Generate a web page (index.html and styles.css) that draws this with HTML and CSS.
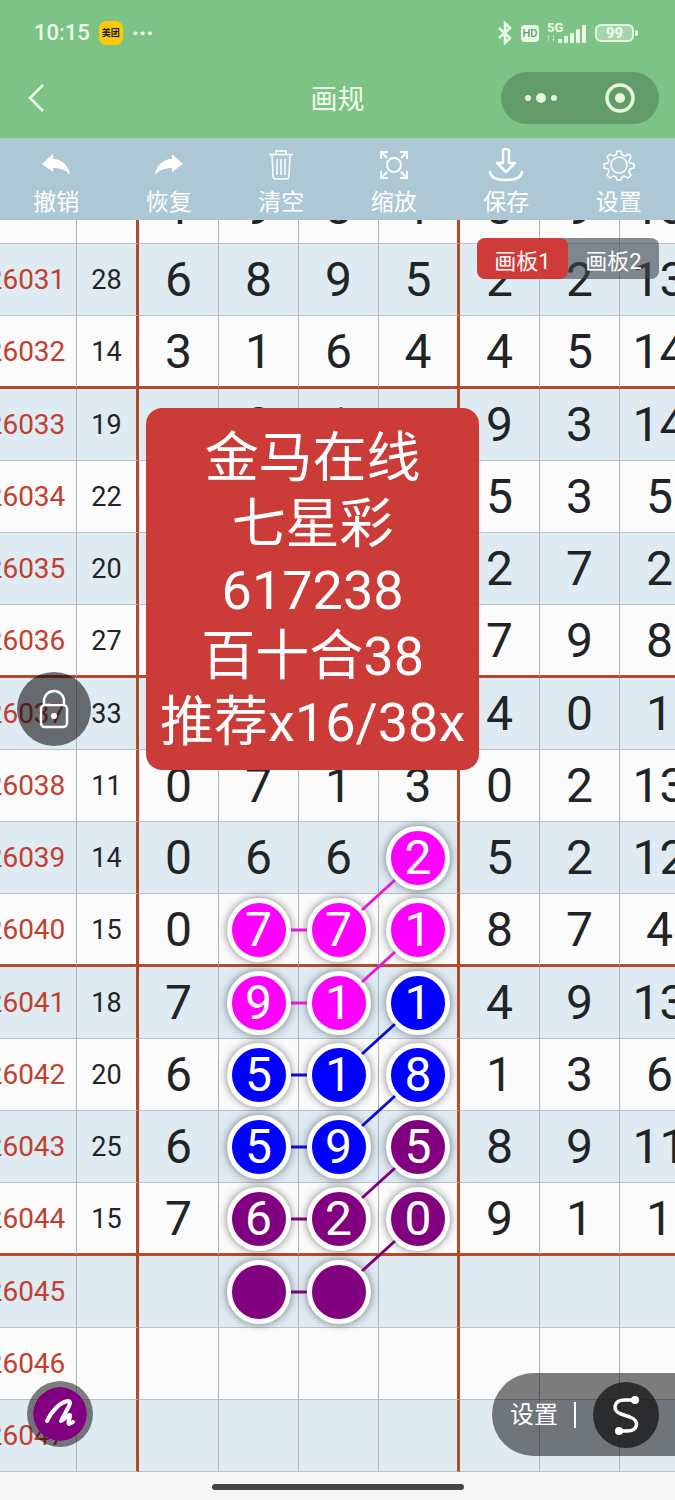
FILE: index.html
```html
<!DOCTYPE html>
<html lang="zh-CN">
<head>
    <meta charset="UTF-8">
    <meta name="viewport" content="width=device-width, initial-scale=1.0">
    <title>画规</title>
    <link rel="stylesheet" href="styles.css">
</head>
<body>
    <header class="header">
        <div class="status">
            <span class="time">10:15</span>
            <span class="app">美团</span>
            <span class="more">···</span>
            <div class="signals">
                <svg width="16" height="24" viewBox="0 0 16 24" fill="none" stroke="#e9fbe6" stroke-width="2.500"><path d="M2 7l11 10-5 5V2l5 5L2 17"/></svg>
                <span class="hd">HD</span>
                <svg width="40" height="24" viewBox="0 0 40 24" fill="#e9fbe6">
                    <text x="0" y="11" class="net">5G</text>
                    <path d="M0 16h3l-1.500-2zM1 16h1v4H1zM5 18h3l-1.500 3zM6 14h1v4H6z" opacity=".5"/>
                    <rect x="11" y="18" width="4" height="4" rx="1"/>
                    <rect x="17" y="15" width="4" height="7" rx="1"/>
                    <rect x="23" y="12" width="4" height="10" rx="1"/>
                    <rect x="29" y="8" width="4" height="14" rx="1"/>
                    <rect x="35" y="4" width="4" height="18" rx="1"/>
                </svg>
                <span class="battery">99</span>
            </div>
        </div>
        <nav class="titlebar">
            <a href="#" class="back" aria-label="返回">
                <svg width="20" height="30" viewBox="0 0 20 30" fill="none" stroke="#effdec" stroke-width="2.500"><path d="M17 2L4 15l13 13"/></svg>
            </a>
            <h1>画规</h1>
            <div class="capsule">
                <button type="button" aria-label="更多">
                    <svg width="34" height="12" viewBox="0 0 34 12" fill="#e4f5e0"><circle cx="4" cy="6" r="3"/><circle cx="17" cy="6" r="5"/><circle cx="30" cy="6" r="3"/></svg>
                </button>
                <button type="button" aria-label="关闭">
                    <svg width="30" height="30" viewBox="0 0 30 30"><circle cx="15" cy="15" r="13" fill="none" stroke="#e4f5e0" stroke-width="3.500"/><circle cx="15" cy="15" r="5" fill="#e4f5e0"/></svg>
                </button>
            </div>
        </nav>
    </header>

    <div class="toolbar">
        <button type="button">
            <svg viewBox="0 0 36 36" fill="#fff"><path d="M4 17L15 7v5c9 0 16 7 17 16-4-5-9-7-17-7v4z"/></svg>
            撤销
        </button>
        <button type="button">
            <svg viewBox="0 0 36 36" fill="#fff"><path d="M32 17L21 7v5C12 12 5 19 4 28c4-5 9-7 17-7v4z"/></svg>
            恢复
        </button>
        <button type="button">
            <svg viewBox="0 0 36 36" fill="none" stroke="#fff" stroke-width="1.500"><path d="M6 7.500h24M13 7V4h10v3M9 8l1 21q0 3 3 3h10q3 0 3-3l1-21M14 12v16M18 12v16M22 12v16"/></svg>
            清空
        </button>
        <button type="button">
            <svg viewBox="0 0 36 36" fill="none" stroke="#fff" stroke-width="2"><circle cx="18" cy="18" r="7"/><path d="M5 12V5h7M5 5l6 6M24 5h7v7M31 5l-6 6M5 24v7h7M5 31l6-6M24 31h7v-7M31 31l-6-6"/></svg>
            缩放
        </button>
        <button type="button">
            <svg viewBox="0 0 36 36" fill="none" stroke="#fff" stroke-width="2.500" stroke-linejoin="round" stroke-linecap="round"><path d="M15 4q0-2 3-2t3 2v12h6l-9 9-9-9h6zM2 25q1 8 16 8t16-8"/></svg>
            保存
        </button>
        <button type="button">
            <svg viewBox="0 0 36 36" fill="none" stroke="#fff" stroke-width="1.500" stroke-linejoin="round"><circle cx="18" cy="18" r="8"/><path d="M16 4h4l1 4 3 1 4-2 2 3-2 4 1 2 4 1v4l-4 1-1 3 2 3-3 3-4-2-2 1-1 3h-4l-1-3-3-1-3 2-3-3 2-4-1-2-4-1v-4l4-1 1-3-2-3 3-3 3 2 3-1z"/></svg>
            设置
        </button>
    </div>

    <main class="board">
        <table class="trend">
            <colgroup>
                <col class="c-issue"><col class="c-sum"><col class="c-num"><col class="c-num"><col class="c-num"><col class="c-last"><col class="c-num"><col class="c-num"><col class="c-num">
            </colgroup>
            <tbody>
                <tr><th>26030</th><td></td><td>1</td><td>9</td><td>8</td><td>1</td><td>8</td><td>9</td><td>13</td></tr>
                <tr><th>26031</th><td>28</td><td>6</td><td>8</td><td>9</td><td>5</td><td>2</td><td>2</td><td>13</td></tr>
                <tr><th>26032</th><td>14</td><td>3</td><td>1</td><td>6</td><td>4</td><td>4</td><td>5</td><td>14</td></tr>
                <tr><th>26033</th><td>19</td><td></td><td>8</td><td>1</td><td></td><td>9</td><td>3</td><td>14</td></tr>
                <tr><th>26034</th><td>22</td><td></td><td></td><td></td><td></td><td>5</td><td>3</td><td>5</td></tr>
                <tr><th>26035</th><td>20</td><td></td><td></td><td></td><td></td><td>2</td><td>7</td><td>2</td></tr>
                <tr><th>26036</th><td>27</td><td></td><td></td><td></td><td></td><td>7</td><td>9</td><td>8</td></tr>
                <tr><th>26037</th><td>33</td><td></td><td></td><td></td><td></td><td>4</td><td>0</td><td>1</td></tr>
                <tr><th>26038</th><td>11</td><td>0</td><td>7</td><td>1</td><td>3</td><td>0</td><td>2</td><td>13</td></tr>
                <tr><th>26039</th><td>14</td><td>0</td><td>6</td><td>6</td><td><span class="ball pink">2</span></td><td>5</td><td>2</td><td>12</td></tr>
                <tr><th>26040</th><td>15</td><td>0</td><td><span class="ball pink">7</span></td><td><span class="ball pink">7</span></td><td><span class="ball pink">1</span></td><td>8</td><td>7</td><td>4</td></tr>
                <tr><th>26041</th><td>18</td><td>7</td><td><span class="ball pink">9</span></td><td><span class="ball pink">1</span></td><td><span class="ball blue">1</span></td><td>4</td><td>9</td><td>13</td></tr>
                <tr><th>26042</th><td>20</td><td>6</td><td><span class="ball blue">5</span></td><td><span class="ball blue">1</span></td><td><span class="ball blue">8</span></td><td>1</td><td>3</td><td>6</td></tr>
                <tr><th>26043</th><td>25</td><td>6</td><td><span class="ball blue">5</span></td><td><span class="ball blue">9</span></td><td><span class="ball purple">5</span></td><td>8</td><td>9</td><td>11</td></tr>
                <tr><th>26044</th><td>15</td><td>7</td><td><span class="ball purple">6</span></td><td><span class="ball purple">2</span></td><td><span class="ball purple">0</span></td><td>9</td><td>1</td><td>1</td></tr>
                <tr><th>26045</th><td></td><td></td><td><span class="ball purple"></span></td><td><span class="ball purple"></span></td><td></td><td></td><td></td><td></td></tr>
                <tr><th>26046</th><td></td><td></td><td></td><td></td><td></td><td></td><td></td><td></td></tr>
                <tr><th>26047</th><td></td><td></td><td></td><td></td><td></td><td></td><td></td><td></td></tr>
            </tbody>
        </table>

        <!-- links between the marked numbers -->
        <svg class="links" width="675" height="1252" viewBox="0 0 675 1252" fill="none" stroke-width="3">
            <g stroke="#e619d8">
                <path d="M291 710h16M362 690l33-30M291 783h16M362 762l33-30"/>
            </g>
            <g stroke="#0d0dd0">
                <path d="M362 834l33-30M291 855h16M362 906l33-30M291 927h16"/>
            </g>
            <g stroke="#800080">
                <path d="M362 978l33-30M291 999h16M362 1051l33-30M291 1072h16"/>
            </g>
        </svg>

        <div class="tabs">
            <button type="button" class="active">画板1</button>
            <button type="button">画板2</button>
        </div>

        <div class="note">
            <p>金马在线</p>
            <p>七星彩</p>
            <p>617238</p>
            <p>百十合38</p>
            <p>推荐x16/38x</p>
        </div>

        <button type="button" class="lock" aria-label="锁定">
            <svg width="32" height="42" viewBox="0 0 32 42" fill="none" stroke="#fff" stroke-width="2.500"><rect x="3" y="17" width="26" height="22" rx="4"/><path d="M6 17v-4a10 10 0 0 1 20 0v4"/><circle cx="16" cy="28" r="3" fill="#fff" stroke="none"/></svg>
        </button>

        <button type="button" class="pen" aria-label="画笔">
            <svg width="36" height="36" viewBox="0 0 36 36" fill="none" stroke="#fff" stroke-width="4" stroke-linecap="round" stroke-linejoin="round"><path d="M5 25C9 16 18 6 26 5c6 0-3 11-7 20 4-2 6-6 9-6 1 3-3 6-1 9l4-2"/></svg>
        </button>

        <div class="dock">
            <button type="button" class="dock-set">设置</button>
            <button type="button" class="dock-line" aria-label="曲线">
                <svg width="32" height="44" viewBox="0 0 32 44" fill="none" stroke="#fff" stroke-width="3.500"><path d="M25 7H15C3 7 2 18 11 21l9 3c10 4 8 14-3 14H9"/><circle cx="25" cy="7" r="4" fill="#fff" stroke="none"/><circle cx="9" cy="38" r="4" fill="#fff" stroke="none"/></svg>
            </button>
        </div>
    </main>

    <footer class="home"><span></span></footer>
</body>
</html>
```

FILE: styles.css
```css
*{
    box-sizing: border-box;
}

body{
    margin: 0;
    background: #f6f6f6;
    color: #1f2426;
    font-family: Roboto, "Noto Sans CJK SC", sans-serif;
    overflow-x: hidden;
}

button{
    border: 0;
    padding: 0;
    background: none;
    color: #fff;
    font-family: inherit;
    cursor: pointer;
}

svg{
    display: block;
}

/* header */
.header{
    background: #7cc385;
    color: #effdec;
    height: 138px;
}

.status{
    display: flex;
    align-items: center;
    height: 58px;
    padding: 8px 41px 0 34px;
}

.time{
    font-size: 22px;
    font-weight: 500;
    line-height: 24px;
}

.app{
    margin-left: 9px;
    width: 24px;
    height: 24px;
    border-radius: 7px;
    background: #fbcb09;
    color: #221c00;
    font-size: 9px;
    font-weight: bold;
    line-height: 24px;
    text-align: center;
}

.more{
    margin-left: 9px;
    font-size: 24px;
    font-weight: bold;
    line-height: 24px;
}

.signals{
    display: flex;
    align-items: center;
    gap: 8px;
    margin-left: auto;
}

.hd{
    width: 18px;
    height: 17px;
    border-radius: 4px;
    background: #e9fbe6;
    color: #5f9c68;
    font-size: 11px;
    font-weight: 500;
    line-height: 17px;
    text-align: center;
}

.net{
    font-size: 13px;
    font-weight: bold;
}

.battery{
    position: relative;
    width: 39px;
    height: 18px;
    border: 2px solid #dff5dc;
    border-radius: 6px;
    background: #a5d6a9;
    font-size: 15px;
    font-weight: bold;
    line-height: 14px;
    text-align: center;
}

.battery::after{
    content: "";
    position: absolute;
    top: 4px;
    right: -6px;
    width: 3px;
    height: 6px;
    border-radius: 2px;
    background: #dff5dc;
}

.titlebar{
    display: grid;
    grid-template-columns: 1fr auto 1fr;
    align-items: center;
    height: 80px;
    padding: 0 16px;
}

.back{
    width: 20px;
    margin-left: 10px;
}

h1{
    margin: 0;
    font-size: 27px;
    font-weight: normal;
    line-height: 36px;
    padding-top: 4px;
}

.capsule{
    justify-self: end;
    display: flex;
    width: 158px;
    height: 52px;
    border-radius: 26px;
    background: #629d69;
}

.capsule button{
    flex: 1;
    display: flex;
    align-items: center;
    justify-content: center;
}

/* toolbar */
.toolbar{
    display: grid;
    grid-template-columns: repeat(6, 1fr);
    height: 82px;
    background: #adc8d5;
}

.toolbar button{
    display: flex;
    flex-direction: column;
    align-items: center;
    gap: 4px;
    padding-top: 9px;
    font-size: 23px;
    line-height: 32px;
}

.toolbar svg{
    width: 36px;
    height: 36px;
}

/* trend table */
.board{
    position: relative;
    overflow: hidden;
}

.trend{
    width: 724px;
    margin: -48px 0 0 -24px;
    table-layout: fixed;
    border-collapse: separate;
    border-spacing: 0;
    background: #fbfbfb;
}

.c-issue{ width: 101px; }
.c-sum{ width: 62px; }
.c-num{ width: 80px; }
.c-last{ width: 81px; }

.trend th,
.trend td{
    height: 72px;
    padding: 0;
    border-right: 1px solid #b0b3b8;
    border-bottom: 1px solid #b9c0c8;
    font-size: 48px;
    font-weight: normal;
    line-height: 56px;
    text-align: center;
    white-space: nowrap;
}

.trend th{
    color: #c2402f;
    font-size: 28px;
}

.trend td:nth-child(2){
    font-size: 27px;
}

.trend td:nth-child(2),
.trend td:nth-child(6){
    border-right: 3px solid #b24b2b;
}

.trend tr:nth-child(even){
    background: #deebf2;
}

.trend tr:nth-child(4n + 3) > *{
    height: 73px;
    padding-top: 2px;
    border-bottom: 3px solid #b24b2b;
}

.ball{
    display: block;
    width: 64px;
    height: 64px;
    margin: 0 auto;
    border: 5px solid #fff;
    border-radius: 50%;
    box-shadow: 0 0 8px rgba(0, 0, 0, .5);
    color: #fff;
    line-height: 54px;
}

.pink{ background: #ff00ff; }
.blue{ background: #0000ff; }
.purple{ background: #800080; }

.links{
    position: absolute;
    top: 0;
    left: 0;
    pointer-events: none;
}

/* floating parts */
.tabs{
    position: absolute;
    top: 18px;
    right: 16px;
    display: flex;
    border-radius: 8px;
    background: rgba(60, 68, 74, .6);
    overflow: hidden;
}

.tabs button{
    width: 91px;
    height: 41px;
    padding-top: 6px;
    font-size: 22px;
    line-height: 34px;
}

.tabs .active{
    border-radius: 8px;
    background: #cf3b39;
}

.note{
    position: absolute;
    top: 188px;
    left: 146px;
    padding: 18px 14px 14px;
    border-radius: 16px;
    background: #cb3c38;
    color: #fff;
    font-size: 54px;
    line-height: 66px;
    text-align: center;
    white-space: nowrap;
}

.note p{
    margin: 0;
}

.lock{
    position: absolute;
    top: 452px;
    left: 17px;
    display: flex;
    align-items: center;
    justify-content: center;
    width: 74px;
    height: 74px;
    border-radius: 50%;
    background: rgba(0, 0, 0, .55);
}

.pen{
    position: absolute;
    bottom: 25px;
    left: 27px;
    display: flex;
    align-items: center;
    justify-content: center;
    width: 66px;
    height: 66px;
    border: 6px solid rgba(0, 0, 0, .5);
    border-radius: 50%;
    background: #800080;
    background-clip: padding-box;
}

.dock{
    position: absolute;
    right: 0;
    bottom: 16px;
    display: flex;
    align-items: center;
    gap: 17px;
    height: 83px;
    padding: 0 16px 0 18px;
    border-radius: 42px 0 0 42px;
    background: rgba(0, 0, 0, .5);
}

.dock-set{
    padding-right: 16px;
    border-right: 2px solid #fff;
    font-size: 24px;
    line-height: 26px;
}

.dock-line{
    display: flex;
    align-items: center;
    justify-content: center;
    width: 66px;
    height: 66px;
    border-radius: 50%;
    background: rgba(20, 20, 20, .75);
}

.home{
    display: flex;
    justify-content: center;
    height: 28px;
    padding-top: 12px;
}

.home span{
    width: 252px;
    height: 6px;
    border-radius: 3px;
    background: #444;
}
```
